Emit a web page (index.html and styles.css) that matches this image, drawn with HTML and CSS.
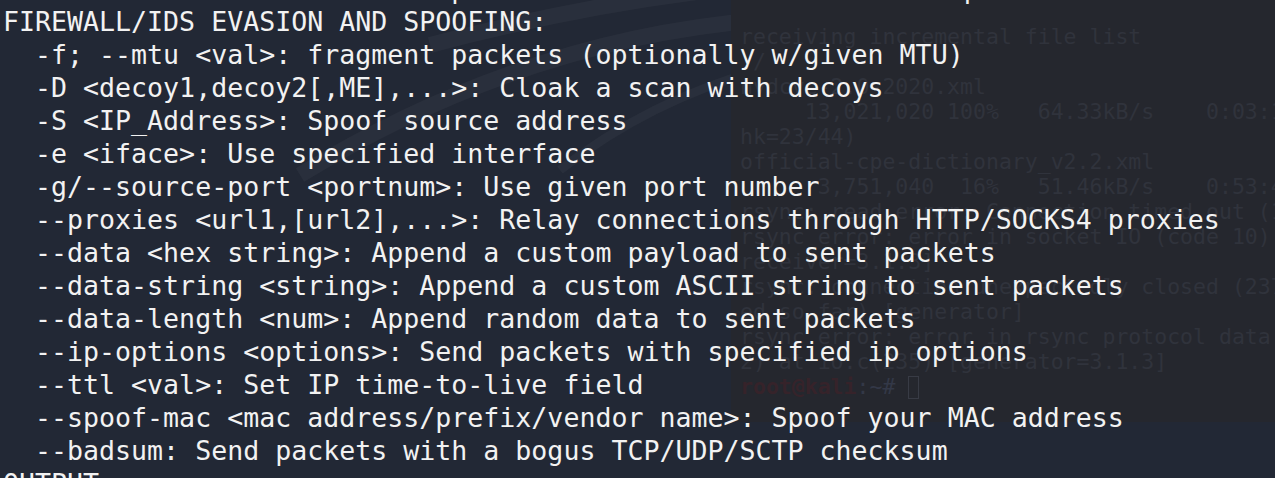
FILE: index.html
```html
<!DOCTYPE html>
<html lang="en">
<head>
    <meta charset="UTF-8">
    <meta name="viewport" content="width=device-width, initial-scale=1.0">
    <title>nmap --help</title>
    <link rel="stylesheet" href="styles.css">
</head>
<body>
    <div class="desktop">
        <!-- wallpaper swoosh behind the windows -->
        <svg class="wallpaper" viewBox="0 0 1275 478" width="1275" height="478">
            <path d="M 300 175 Q 520 40 760 20" class="swoosh"/>
            <path d="M 430 45 Q 600 0 760 -15" class="swoosh"/>
            <path d="M 560 170 Q 650 100 760 70" class="swoosh thin"/>
        </svg>

        <!-- rsync window in the background -->
        <div class="back-term">
<pre class="back-text">receiving incremental file list
./
nvdcve-2.0-2020.xml
     13,021,020 100%   64.33kB/s    0:03:17 (xfr#1, to-c
hk=23/44)
official-cpe-dictionary_v2.2.xml
      3,751,040  16%   51.46kB/s    0:53:41
rsync: read error: Connection timed out (110)
rsync error: error in socket IO (code 10) at io.c(785) [
receiver=3.1.3]
rsync: connection unexpectedly closed (2370 bytes receiv
ed so far) [generator]
rsync error: error in rsync protocol data stream (code 1
2) at io.c(235) [generator=3.1.3]
<span class="prompt-user">root@kali</span><span class="prompt-path">:~#</span> <span class="cursor"></span></pre>
        </div>

        <!-- front terminal -->
<pre class="front-text">  --max-rate &lt;number&gt;: Send packets no faster than &lt;number&gt; per second
FIREWALL/IDS EVASION AND SPOOFING:
  -f; --mtu &lt;val&gt;: fragment packets (optionally w/given MTU)
  -D &lt;decoy1,decoy2[,ME],...&gt;: Cloak a scan with decoys
  -S &lt;IP_Address&gt;: Spoof source address
  -e &lt;iface&gt;: Use specified interface
  -g/--source-port &lt;portnum&gt;: Use given port number
  --proxies &lt;url1,[url2],...&gt;: Relay connections through HTTP/SOCKS4 proxies
  --data &lt;hex string&gt;: Append a custom payload to sent packets
  --data-string &lt;string&gt;: Append a custom ASCII string to sent packets
  --data-length &lt;num&gt;: Append random data to sent packets
  --ip-options &lt;options&gt;: Send packets with specified ip options
  --ttl &lt;val&gt;: Set IP time-to-live field
  --spoof-mac &lt;mac address/prefix/vendor name&gt;: Spoof your MAC address
  --badsum: Send packets with a bogus TCP/UDP/SCTP checksum
OUTPUT:</pre>
    </div>
</body>
</html>
```

FILE: styles.css
```css
html, body {
    margin: 0;
    padding: 0;
    background: #222835;
    overflow: hidden;
}

.desktop {
    position: relative;
    width: 1275px;
    height: 478px;
    overflow: hidden;
}

.wallpaper {
    position: absolute;
    left: 0;
    top: 0;
}

.swoosh {
    fill: none;
    stroke: rgba(255, 255, 255, 0.035);
    stroke-width: 16;
}

.swoosh.thin {
    stroke-width: 9;
}

/* background window */
.back-term {
    position: absolute;
    left: 731px;
    top: 0;
    right: 0;
    height: 422px;
    background: #25272e;
    overflow: hidden;
}

.back-text {
    margin: 0;
    padding: 24px 0 0 9px;
    font-family: "DejaVu Sans Mono", monospace;
    font-size: 21.5px;
    line-height: 25px;
    color: #30333c;
    white-space: pre;
}

.prompt-user {
    color: #36232a;
    font-weight: bold;
}

.prompt-path {
    color: #333847;
}

.cursor {
    display: inline-block;
    width: 11px;
    height: 23px;
    border: 1px solid #383b45;
    vertical-align: -5px;
    box-sizing: border-box;
}

/* front terminal text */
.front-text {
    position: relative;
    margin: -28px 0 0 0;
    padding: 0 0 0 3px;
    font-family: "DejaVu Sans Mono", monospace;
    font-size: 26.6px;
    line-height: 33px;
    color: #f2f2f2;
    white-space: pre;
}
```
